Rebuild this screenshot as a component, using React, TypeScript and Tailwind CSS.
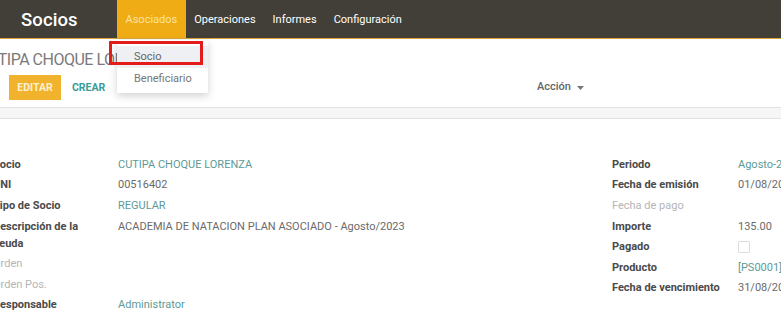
import React from "react";

const leftRows: { label: string; value?: string; kind?: "link" | "text"; muted?: boolean }[] = [
  { label: "Socio", value: "CUTIPA CHOQUE LORENZA", kind: "link" },
  { label: "DNI", value: "00516402", kind: "text" },
  { label: "Tipo de Socio", value: "REGULAR", kind: "link" },
  { label: "Descripción de la deuda", value: "ACADEMIA DE NATACION PLAN ASOCIADO - Agosto/2023", kind: "text" },
  { label: "Orden", muted: true },
  { label: "Orden Pos.", muted: true },
  { label: "Responsable", value: "Administrator", kind: "link" },
];

const rightRows: { label: string; value?: string; kind?: "link" | "text" | "check"; muted?: boolean }[] = [
  { label: "Periodo", value: "Agosto-2023", kind: "link" },
  { label: "Fecha de emisión", value: "01/08/2023", kind: "text" },
  { label: "Fecha de pago", muted: true },
  { label: "Importe", value: "135.00", kind: "text" },
  { label: "Pagado", kind: "check" },
  { label: "Producto", value: "[PS0001] Plan Asociado", kind: "link" },
  { label: "Fecha de vencimiento", value: "31/08/2023", kind: "text" },
];

export default function App() {
  return (
    <div className="w-[781px] h-[323px] overflow-hidden bg-white [font-family:Roboto,'Liberation_Sans',sans-serif] text-[11px] text-[#555]">
      {/* Navbar */}
      <div className="h-[39px] bg-[#423f38] border-b border-[#d8a536] flex items-stretch">
        <div className="w-[117px] pl-[21px] pt-[3px] flex items-center text-[18.5px] font-medium text-white tracking-[0.1px]">
          Socios
        </div>
        <div className="relative bg-[#efac15] px-[8.5px] pt-[3px] flex items-center text-[#fbe3a0] text-[11px]">
          Asociados
          {/* Dropdown */}
          <div className="absolute left-0 top-[40px] w-[91px] bg-white shadow-[0_3px_8px_rgba(0,0,0,0.18)] pt-[6px] pb-[3px] z-10">
            <div className="h-[22px] bg-[#eef0f4] pl-[17px] flex items-center text-[11px] text-[#666]">Socio</div>
            <div className="h-[22px] pl-[17px] flex items-center text-[11px] text-[#777]">Beneficiario</div>
          </div>
          {/* red annotation box */}
          <div className="absolute left-[-8px] top-[41px] w-[94px] h-[24px] border-[3px] border-[#e31b1b] z-20"></div>
        </div>
        <div className="px-[8.5px] pt-[3px] flex items-center text-[11px] text-white">Operaciones</div>
        <div className="px-[8.5px] pt-[3px] flex items-center text-[11px] text-white">Informes</div>
        <div className="px-[8.5px] pt-[3px] flex items-center text-[11px] text-white">Configuración</div>
      </div>

      {/* Control panel */}
      <div className="h-[68px] flex flex-col">
        <div className="h-[36px] flex items-center pt-[5px]">
          <div className="-ml-[22px] whitespace-nowrap text-[16px] tracking-[-0.5px] text-[#7a7a7a]">CUTIPA CHOQUE LORENZA</div>
        </div>
        <div className="flex items-center h-[25px]">
          <div className="w-[528px] flex items-center">
            <div className="ml-[9px] w-[52px] h-[25px] bg-[#f1b32d] flex items-center justify-center text-[10.5px] font-bold text-[#fdf1cf]">
              EDITAR
            </div>
            <div className="ml-[11px] text-[10.5px] font-bold text-[#3a9b98]">CREAR</div>
          </div>
          <div className="pl-[9px] flex items-center gap-[6px] text-[11px] font-medium text-[#666]">
            Acción
            <svg width="7" height="4" viewBox="0 0 7 4"><path d="M0 0h7L3.5 4z" fill="#777" /></svg>
          </div>
        </div>
      </div>

      {/* separator band */}
      <div className="h-[12px] bg-[#f6f6f6] border-t border-b border-[#e2e2e2]"></div>

      {/* Sheet */}
      <div className="pt-[35px] flex">
        <div className="w-[604px] shrink-0 flex flex-col">
          {leftRows.map((r) => (
            <div key={r.label} className="flex py-[1.8px] leading-[17px]">
              <div
                className={`-ml-[7px] w-[125px] shrink-0 pr-[10px] ${r.muted ? "text-[#b5b5b5]" : "font-bold text-[#4a4a4a]"}`}
              >
                {r.label}
              </div>
              <div className={`whitespace-nowrap ${r.kind === "link" ? "text-[#5d9a97]" : "text-[#6a6a6a]"}`}>
                {r.value}
              </div>
            </div>
          ))}
        </div>
        <div className="flex flex-col ml-[8px] shrink-0">
          {rightRows.map((r) => (
            <div key={r.label} className="flex py-[1.8px] leading-[17px] whitespace-nowrap">
              <div className={`w-[126px] shrink-0 ${r.muted ? "text-[#b5b5b5]" : "font-bold text-[#4a4a4a]"}`}>{r.label}</div>
              {r.kind === "check" ? (
                <div className="flex items-center">
                  <div className="w-[12px] h-[12px] border border-[#dcdcdc] rounded-[1px] bg-white"></div>
                </div>
              ) : (
                <div className={r.kind === "link" ? "text-[#5d9a97]" : "text-[#6a6a6a]"}>{r.value}</div>
              )}
            </div>
          ))}
        </div>
      </div>
    </div>
  );
}
